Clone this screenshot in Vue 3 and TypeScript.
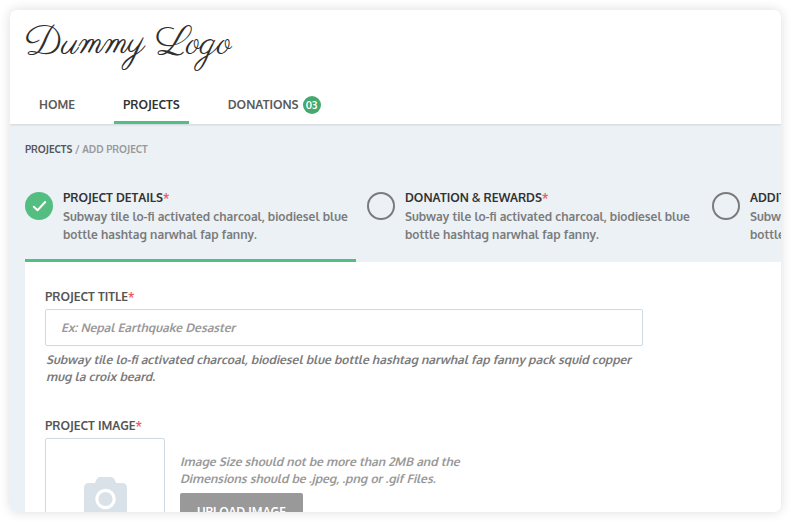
<script setup lang="ts">
import { ref } from 'vue'

interface NavItem {
  label: string
  count?: string
}

interface Step {
  title: string
  required: boolean
}

const navItems: NavItem[] = [
  { label: 'Home' },
  { label: 'Projects' },
  { label: 'Donations', count: '03' },
]
const activeNav = ref('Projects')

const steps: Step[] = [
  { title: 'Project Details', required: true },
  { title: 'Donation & Rewards', required: true },
  { title: 'Additional Details', required: false },
]
const activeStep = ref(0)
const projectTitle = ref('')
</script>

<template>
  <div class="card">
    <header class="header">
      <a href="#" class="logo">Dummy Logo</a>
      <nav class="nav">
        <a
          v-for="item in navItems"
          :key="item.label"
          href="#"
          class="nav-link"
          :class="{ active: item.label === activeNav }"
          @click.prevent="activeNav = item.label"
        >
          {{ item.label }}
          <span v-if="item.count" class="badge">{{ item.count }}</span>
        </a>
      </nav>
    </header>

    <main class="main">
      <nav class="breadcrumb" aria-label="Breadcrumb">
        <a href="#">Projects</a> / Add Project
      </nav>

      <div class="steps">
        <button
          v-for="(step, i) in steps"
          :key="step.title"
          type="button"
          class="step"
          :class="{ current: i === activeStep }"
          @click="activeStep = i"
        >
          <svg class="mark" viewBox="0 0 28 28" aria-hidden="true">
            <template v-if="i === activeStep">
              <circle cx="14" cy="14" r="14" fill="#53be80" />
              <path d="M8.8 14.8 12.5 18.2 20.2 10" fill="none" stroke="#fff" stroke-width="2" stroke-linecap="round" stroke-linejoin="round" />
            </template>
            <circle v-else cx="14" cy="14" r="13" fill="none" stroke="#7b7b7b" stroke-width="2" />
          </svg>
          <span class="step-text">
            <span class="step-title">{{ step.title }}<span v-if="step.required" class="req">*</span></span>
            <span class="step-desc">Subway tile lo-fi activated charcoal, biodiesel blue<br />bottle hashtag narwhal fap fanny.</span>
          </span>
        </button>
      </div>

      <form class="form" @submit.prevent>
        <label class="label" for="project-title">Project Title<span class="req">*</span></label>
        <input id="project-title" v-model="projectTitle" class="input" type="text" placeholder="Ex: Nepal Earthquake Desaster" />
        <p class="help">
          Subway tile lo-fi activated charcoal, biodiesel blue bottle hashtag narwhal fap fanny pack squid copper<br />mug la croix beard.
        </p>

        <div class="label">Project Image<span class="req">*</span></div>
        <div class="upload">
          <div class="preview">
            <svg class="camera" viewBox="0 0 43 39" aria-hidden="true">
              <path fill="#d9e2e9" d="M5 6H11L12.500 2.500Q13.500 0 16 0H27Q29.500 0 30.500 2.500L32 6H38Q43 6 43 11V34Q43 39 38 39H5Q0 39 0 34V11Q0 6 5 6Z" />
              <circle cx="21.500" cy="22" r="8.700" fill="#d9e2e9" stroke="#fff" stroke-width="3.200" />
            </svg>
          </div>
          <div class="upload-info">
            <p class="hint">Image Size should not be more than 2MB and the<br />Dimensions should be .jpeg, .png or .gif Files.</p>
            <button type="button" class="upload-button">Upload Image</button>
          </div>
        </div>
      </form>
    </main>
  </div>
</template>

<style>
body {
  background: #fff;
}
</style>

<style scoped>
.card {
  box-sizing: border-box;
  display: flex;
  flex-direction: column;
  height: calc(100vh - 20px);
  margin: 10px;
  overflow: hidden;
  border-radius: 7px;
  background: #fff;
  box-shadow: 0 0 12px rgba(0, 0, 0, 0.14);
  font-family: Oxygen, "Noto Sans", "Open Sans", sans-serif;
  font-size: 12px;
  font-weight: 700;
  color: #7b7b7b;
}

a {
  color: inherit;
  text-decoration: none;
}

p {
  margin: 0;
}

.header {
  position: relative;
  flex: none;
  background: #fff;
  box-shadow: 0 1px 2px rgba(0, 0, 0, 0.12);
}

.logo {
  display: block;
  padding: 6px 15px 0;
  font-family: Parisienne, "Liberation Serif", cursive;
  font-size: 38px;
  font-weight: 400;
  line-height: 56px;
  color: #2e2e2e;
}

.nav {
  display: flex;
  gap: 30px;
  padding: 16px 20px 0;
}

.nav-link {
  display: flex;
  align-items: center;
  gap: 4px;
  height: 33px;
  padding: 0 9px;
  border-bottom: 3px solid transparent;
  line-height: 18px;
  text-transform: uppercase;
  color: #5a5a5a;
}

.nav-link.active {
  border-color: #53be80;
  color: #333;
}

.badge {
  width: 18px;
  height: 18px;
  border-radius: 50%;
  background: #43a96f;
  font-size: 10px;
  text-align: center;
  color: #fff;
}

.main {
  flex: 1;
  min-height: 0;
  padding: 16px 0 0 15px;
  background: #ebf1f5;
}

.breadcrumb {
  font-size: 10px;
  line-height: 18px;
  text-transform: uppercase;
  color: #999;
}

.breadcrumb a {
  color: #555;
}

.steps {
  display: flex;
  padding-top: 31px;
}

.step {
  box-sizing: border-box;
  display: flex;
  flex: none;
  align-items: flex-start;
  gap: 10px;
  width: 345px;
  height: 73px;
  padding: 0 0 0 11px;
  border: 0;
  border-bottom: 3px solid transparent;
  background: none;
  font: inherit;
  text-align: left;
  white-space: nowrap;
  color: inherit;
}

.step:first-child {
  width: 331px;
  padding-left: 0;
}

.step.current {
  border-color: #53be80;
}

.mark {
  flex: none;
  width: 28px;
  height: 28px;
  margin-top: 3px;
}

.step-title,
.step-desc {
  display: block;
  line-height: 18px;
}

.step-title {
  margin-bottom: 1px;
  text-transform: uppercase;
  color: #333;
}

.req {
  color: #ee5a5f;
}

.form {
  padding: 26px 20px 0;
  background: #fff;
}

.label {
  display: block;
  line-height: 18px;
  text-transform: uppercase;
  color: #555;
}

.input {
  box-sizing: border-box;
  display: block;
  width: 100%;
  max-width: 598px;
  height: 37px;
  margin-top: 3px;
  padding: 0 15px;
  border: 1px solid #cfd9e1;
  border-radius: 2px;
  background: #fff;
  font: inherit;
  font-style: italic;
  color: #555;
}

.input::placeholder {
  color: #999;
  opacity: 1;
}

.help {
  padding: 5px 1px 32px;
  font-style: italic;
  line-height: 17px;
}

.upload {
  display: flex;
  gap: 15px;
  padding-top: 3px;
}

.preview {
  box-sizing: border-box;
  display: flex;
  align-items: center;
  justify-content: center;
  width: 120px;
  height: 117px;
  border: 1px solid #cfd9e1;
  border-radius: 2px;
}

.camera {
  width: 43px;
  height: 39px;
}

.upload-info {
  padding-top: 15px;
}

.hint {
  font-style: italic;
  line-height: 17px;
  color: #999;
}

.upload-button {
  height: 37px;
  margin-top: 6px;
  padding: 0 17px;
  border: 0;
  border-radius: 2px;
  background: #999;
  font: inherit;
  text-transform: uppercase;
  color: #fff;
}
</style>
